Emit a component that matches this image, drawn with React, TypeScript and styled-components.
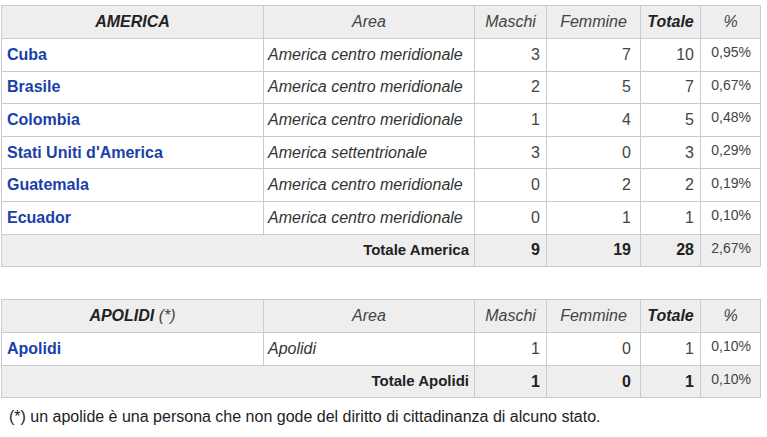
import React from "react";
import styled, { createGlobalStyle } from "styled-components";

const Global = createGlobalStyle`
  html, body { margin: 0; padding: 0; background: #ffffff; }
  body { font-family: "Liberation Sans", Arial, sans-serif; color: #222222; }
`;

const Page = styled.div`
  padding: 5px 7px 0 1px;
  display: flex;
  flex-direction: column;
  gap: 32px;
`;

const Table = styled.table`
  border-collapse: collapse;
  table-layout: fixed;
  width: 759px;
  font-size: 16px;
  color: #222222;
  border: 1px solid #c8ccd1;
`;

const Row = styled.tr<{ $total?: boolean }>`
  height: 32.6px;
  background: ${(p) => (p.$total ? "#eeeeee" : "#ffffff")};
`;

const HeadRow = styled.tr`
  height: 33px;
  background: #eeeeee;
`;

const Th = styled.th<{ $bold?: boolean }>`
  border: 1px solid #c8ccd1;
  padding: 0 6px;
  font-style: italic;
  font-weight: ${(p) => (p.$bold ? 700 : 400)};
  text-align: center;
  color: ${(p) => (p.$bold ? "#222222" : "#444444")};
  white-space: nowrap;
`;

const Note = styled.span`
  font-weight: 400;
  color: #444444;
`;

const NameCell = styled.td`
  border: 1px solid #c8ccd1;
  padding: 0 5px;
  font-weight: 700;
  white-space: nowrap;
`;

const Link = styled.a`
  color: #1a3fa8;
  text-decoration: none;
`;

const AreaCell = styled.td`
  border: 1px solid #c8ccd1;
  padding: 0 4px;
  font-style: italic;
  color: #333333;
  white-space: nowrap;
`;

const NumCell = styled.td<{ $bold?: boolean; $pad?: number }>`
  border: 1px solid #c8ccd1;
  padding: 0 ${(p) => p.$pad ?? 6}px 0 4px;
  text-align: right;
  font-weight: ${(p) => (p.$bold ? 700 : 400)};
  color: ${(p) => (p.$bold ? "#222222" : "#444444")};
`;

const PctCell = styled.td`
  border: 1px solid #c8ccd1;
  padding: 0 9px 5px 4px;
  text-align: right;
  font-size: 14px;
  color: #444444;
`;

const TotalLabel = styled.td`
  border: 1px solid #c8ccd1;
  padding: 0 5px 2px;
  text-align: right;
  font-size: 15px;
  font-weight: 700;
  color: #222222;
`;

const Footnote = styled.p`
  margin: -22px 0 0 8px;
  font-size: 16px;
  color: #222222;
`;

type Entry = { name: string; area: string; m: number; f: number; t: number; pct: string };

const america: Entry[] = [
  { name: "Cuba", area: "America centro meridionale", m: 3, f: 7, t: 10, pct: "0,95%" },
  { name: "Brasile", area: "America centro meridionale", m: 2, f: 5, t: 7, pct: "0,67%" },
  { name: "Colombia", area: "America centro meridionale", m: 1, f: 4, t: 5, pct: "0,48%" },
  { name: "Stati Uniti d'America", area: "America settentrionale", m: 3, f: 0, t: 3, pct: "0,29%" },
  { name: "Guatemala", area: "America centro meridionale", m: 0, f: 2, t: 2, pct: "0,19%" },
  { name: "Ecuador", area: "America centro meridionale", m: 0, f: 1, t: 1, pct: "0,10%" },
];

const apolidi: Entry[] = [
  { name: "Apolidi", area: "Apolidi", m: 1, f: 0, t: 1, pct: "0,10%" },
];

const Cols = () => (
  <colgroup>
    <col style={{ width: 262 }} />
    <col style={{ width: 211 }} />
    <col style={{ width: 72 }} />
    <col style={{ width: 94 }} />
    <col style={{ width: 60 }} />
    <col style={{ width: 60 }} />
  </colgroup>
);

function DataTable({
  title,
  note,
  rows,
  totalLabel,
  total,
}: {
  title: string;
  note?: string;
  rows: Entry[];
  totalLabel: string;
  total: { m: number; f: number; t: number; pct: string };
}) {
  return (
    <Table>
      <Cols />
      <thead>
        <HeadRow>
          <Th $bold>
            {title}
            {note && <Note> {note}</Note>}
          </Th>
          <Th>Area</Th>
          <Th>Maschi</Th>
          <Th>Femmine</Th>
          <Th $bold>Totale</Th>
          <Th>%</Th>
        </HeadRow>
      </thead>
      <tbody>
        {rows.map((r) => (
          <Row key={r.name}>
            <NameCell>
              <Link href="#">{r.name}</Link>
            </NameCell>
            <AreaCell>{r.area}</AreaCell>
            <NumCell>{r.m}</NumCell>
            <NumCell $pad={9}>{r.f}</NumCell>
            <NumCell>{r.t}</NumCell>
            <PctCell>{r.pct}</PctCell>
          </Row>
        ))}
        <Row $total>
          <TotalLabel colSpan={2}>{totalLabel}</TotalLabel>
          <NumCell $bold>{total.m}</NumCell>
          <NumCell $bold $pad={9}>{total.f}</NumCell>
          <NumCell $bold>{total.t}</NumCell>
          <PctCell>{total.pct}</PctCell>
        </Row>
      </tbody>
    </Table>
  );
}

export default function App() {
  return (
    <>
      <Global />
      <Page>
        <DataTable
          title="AMERICA"
          rows={america}
          totalLabel="Totale America"
          total={{ m: 9, f: 19, t: 28, pct: "2,67%" }}
        />
        <DataTable
          title="APOLIDI"
          note="(*)"
          rows={apolidi}
          totalLabel="Totale Apolidi"
          total={{ m: 1, f: 0, t: 1, pct: "0,10%" }}
        />
        <Footnote>
          (*) un apolide è una persona che non gode del diritto di cittadinanza di alcuno stato.
        </Footnote>
      </Page>
    </>
  );
}
